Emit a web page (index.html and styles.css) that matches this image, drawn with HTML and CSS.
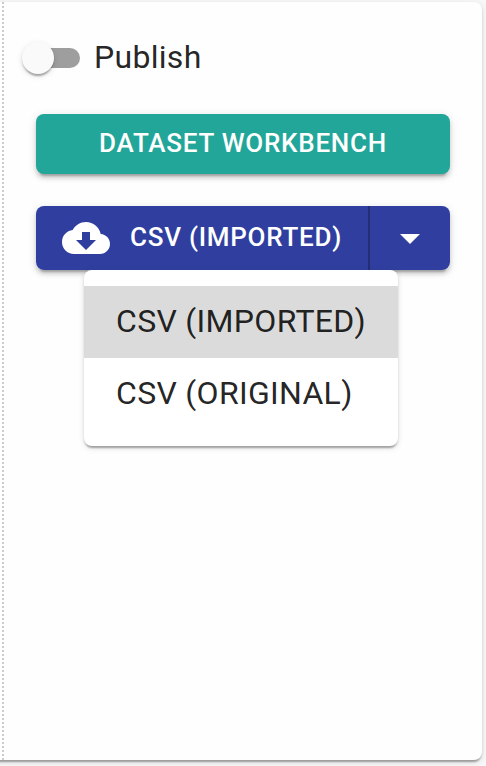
FILE: index.html
```html
<!DOCTYPE html>
<html lang="en">
<head>
<meta charset="utf-8">
<title>Dataset</title>
<link rel="stylesheet" href="styles.css">
</head>
<body>
<main class="card">
  <label class="publish">
    <span class="switch"><span class="thumb"></span></span>
    <span class="publish-label">Publish</span>
  </label>
  <button class="button workbench">DATASET WORKBENCH</button>
  <div class="download">
    <div class="split">
      <button class="button split-main">
        <svg class="icon" viewBox="0 0 24 24"><path d="M19.35 10.04C18.67 6.59 15.64 4 12 4 9.11 4 6.6 5.64 5.35 8.04 2.34 8.36 0 10.91 0 14c0 3.31 2.69 6 6 6h13c2.76 0 5-2.24 5-5 0-2.64-2.05-4.78-4.65-4.96zM17 13l-5 5-5-5h3V9h4v4h3z"/></svg>
        <span class="split-label">CSV (IMPORTED)</span>
      </button>
      <button class="button split-toggle" aria-label="Choose format">
        <svg class="icon" viewBox="0 0 24 24"><path d="M7 10l5 5 5-5z"/></svg>
      </button>
    </div>
    <ul class="menu">
      <li class="menu-item selected">CSV (IMPORTED)</li>
      <li class="menu-item">CSV (ORIGINAL)</li>
    </ul>
  </div>
</main>
</body>
</html>
```
FILE: styles.css
```css
* { box-sizing: border-box; }

body {
  margin: 0;
  height: 766px;
  padding-top: 2px;
  overflow: hidden;
  background: #f7f7f7;
  font-family: Roboto, "Liberation Sans", sans-serif;
  color: rgba(0, 0, 0, 0.87);
  -webkit-font-smoothing: antialiased;
}

.card {
  position: relative;
  width: 494px;
  height: 758px;
  margin-left: -12px;
  padding: 32px 32px 0 48px;
  border-radius: 8px;
  background: #fefefe;
  box-shadow: 0 4px 2px -2px rgba(0, 0, 0, 0.2), 0 2px 2px rgba(0, 0, 0, 0.14), 0 2px 6px rgba(0, 0, 0, 0.12);
}

/* Dotted rule along the panel's left edge */
.card::before {
  content: "";
  position: absolute;
  top: 0;
  bottom: 0;
  left: 14px;
  width: 2px;
  background: repeating-linear-gradient(#ccc 0 2px, transparent 2px 4px);
}

.publish {
  display: flex;
  align-items: center;
  height: 48px;
  margin-left: -8px;
}

.switch {
  display: flex;
  align-items: center;
  width: 52px;
  height: 20px;
  border-radius: 10px;
  background: #9e9e9e;
}

.thumb {
  flex: none;
  width: 32px;
  height: 32px;
  margin-left: -6px;
  border-radius: 50%;
  background: #fafafa;
  box-shadow: 0 4px 2px -2px rgba(0, 0, 0, 0.2), 0 2px 2px rgba(0, 0, 0, 0.14), 0 2px 6px rgba(0, 0, 0, 0.12);
}

.publish-label {
  margin-left: 14px;
  padding-bottom: 2px;
  font-size: 32px;
  line-height: 46px;
  letter-spacing: 0.3px;
}

.button {
  border: 0;
  padding: 0;
  font: 500 26px/46px Roboto, "Liberation Sans", sans-serif;
  letter-spacing: 0.743px;
  color: #fff;
}

.workbench,
.split {
  border-radius: 8px;
  box-shadow: 0 6px 2px -4px rgba(0, 0, 0, 0.2), 0 4px 4px rgba(0, 0, 0, 0.14), 0 2px 10px rgba(0, 0, 0, 0.12);
}

.workbench {
  display: block;
  width: 414px;
  height: 60px;
  margin-top: 32px;
  padding-bottom: 2px;
  background: #22a699;
}

.download {
  position: relative;
  margin-top: 32px;
}

.split {
  display: flex;
  width: 414px;
  height: 64px;
  overflow: hidden;
}

.split .button { background: #303f9f; }

.split-main {
  display: flex;
  align-items: center;
  width: 334px;
  padding-left: 26px;
  border-right: 2px solid #232e74;
}

.split-label {
  margin-left: 20px;
  padding-bottom: 2px;
}

.split-toggle {
  display: flex;
  align-items: center;
  justify-content: center;
  width: 80px;
}

.icon {
  display: block;
  flex: none;
  width: 48px;
  height: 48px;
  fill: currentColor;
}

.menu {
  position: absolute;
  top: 64px;
  left: 48px;
  width: 314px;
  height: 176px;
  margin: 0;
  padding: 16px 0;
  list-style: none;
  border-radius: 8px;
  background: #fff;
  box-shadow: 0 4px 2px -2px rgba(0, 0, 0, 0.2), 0 2px 2px rgba(0, 0, 0, 0.14), 0 2px 6px rgba(0, 0, 0, 0.12);
}

.menu-item {
  height: 72px;
  padding: 12px 32px;
  font-size: 32px;
  line-height: 46px;
  letter-spacing: 0.3px;
  white-space: nowrap;
}

.selected { background: #dbdbdb; }
```
